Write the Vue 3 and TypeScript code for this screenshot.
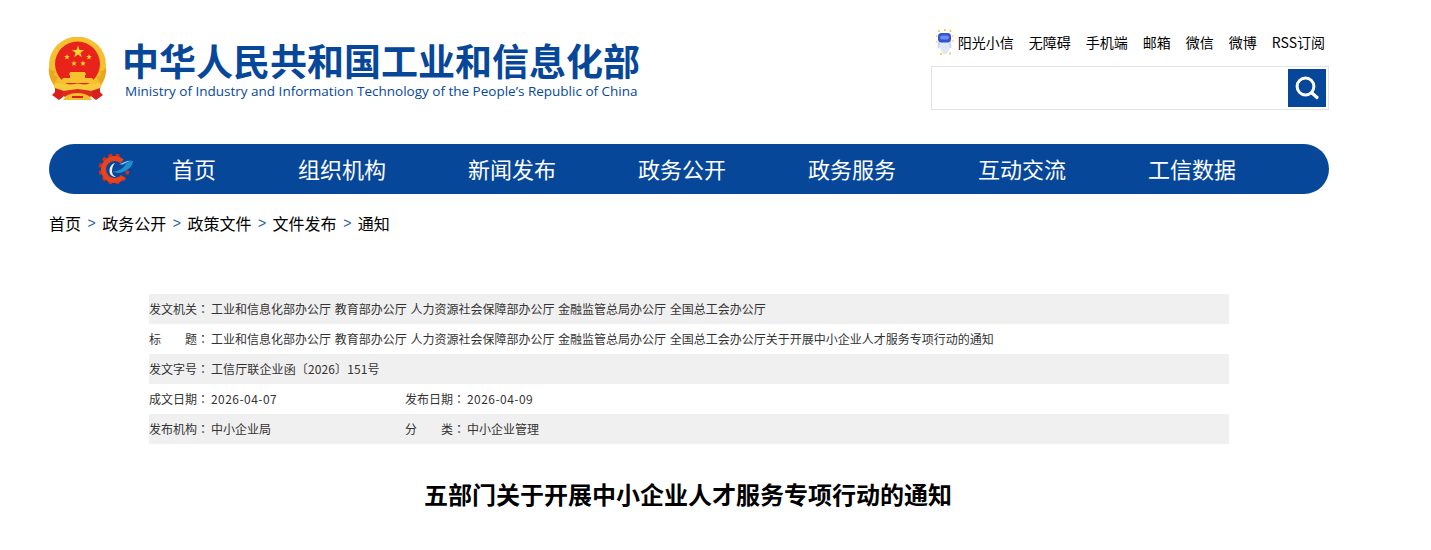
<template>
  <div class="page">
    <header class="top">
      <div class="brand">
        <svg class="emblem" viewBox="0 0 60 64" aria-hidden="true">
          <circle cx="29.500" cy="28" r="28.500" fill="#f5c02f" />
          <path d="M1 30c-1 8 2 15 7 21l3-4-3-3 2-4-4-2 1-4-4-1zM58 30c1 8-2 15-7 21l-3-4 3-3-2-4 4-2-1-4 4-1z" fill="#eaa81f" />
          <circle cx="29.500" cy="27" r="22.500" fill="#e8231c" />
          <polygon v-for="s in stars" :key="s.id" :points="s.points" fill="#fbd431" />
          <path d="M22 35h15l1 3h-1v3h7l4 5H11l4-5h7v-3h-1z" fill="#f6c22d" />
          <path d="M7 45c7 3 15 3 22.500 1.500C37 48 45 48 52 45l1 6-6 2-3 1-14.500-2L15 54l-3-1-6-2z" fill="#f8cb3a" />
          <path d="M7 51l6 2 3 1-1 6-4 3-7-5 3-3zM52 51l-6 2-3 1 1 6 4 3 7-5-3-3z" fill="#d8201c" />
          <path d="M15 54l14.500-2L44 54l1 5-4 1H18l-4-1z" fill="#de2a1f" />
          <path d="M18 59c3-2 7-3 11.500-3S38 57 41 59l3 4H15z" fill="#f4bd2a" />
          <path d="M24 59h11v2H24z" fill="#d8201c" />
        </svg>
        <div class="brand-text">
          <div class="brand-cn">中华人民共和国工业和信息化部</div>
          <div class="brand-en">Ministry of Industry and Information Technology of the People’s Republic of China</div>
        </div>
      </div>
      <div class="tools">
        <div class="links">
          <a class="link robot-link">
            <svg class="robot" viewBox="0 0 18 26" aria-hidden="true">
              <path d="M4 13h9l1 6-2 4-1 2H7l-1-2-2-4z" fill="#dfe8f8" />
              <path d="M2 13l2 .500-.500 6-2-1zM15 13l-2 .500.500 6 2-1z" fill="#c6d6f2" />
              <rect x="2" y="4" width="13" height="9.500" rx="3.500" fill="#3552cf" />
              <rect x="4" y="6.500" width="9" height="4" rx="2" fill="#6f8cf0" />
              <g fill="#f5c11f">
                <circle cx="3" cy="2" r="1" /><circle cx="9" cy="1" r="1" /><circle cx="14.500" cy="2" r="1" />
                <circle cx=".800" cy="7" r=".800" /><circle cx="16.800" cy="7" r=".800" /><circle cx="1" cy="13" r=".800" />
                <circle cx="17" cy="12" r=".800" /><circle cx="5" cy="25" r="1" /><circle cx="14" cy="24.500" r="1" />
              </g>
            </svg>
            阳光小信
          </a>
          <a class="link" v-for="l in links" :key="l">{{ l }}</a>
        </div>
        <div class="search">
          <input class="search-input" type="text" aria-label="搜索" />
          <button class="search-btn" aria-label="搜索">
            <svg width="26" height="26" viewBox="0 0 26 26" fill="none" stroke="#fff" stroke-linecap="round">
              <circle cx="11.500" cy="11.500" r="8.400" stroke-width="3" />
              <path d="M18 18l5 4.500" stroke-width="3.200" />
            </svg>
          </button>
        </div>
      </div>
    </header>

    <nav class="nav">
      <svg class="nav-logo" viewBox="0 0 34 32" aria-hidden="true">
        <g fill="#d62e1c">
          <rect v-for="a in teeth" :key="a" x="13" y="0.500" width="4" height="3.500" rx="1" :transform="`rotate(${a} 15 16)`" />
        </g>
        <path d="M23 8.500A11 11 0 1 0 24 23.500" fill="none" stroke="#e8431d" stroke-width="5" />
        <path d="M10.500 18c0-4 2-7 5.500-8-2 2-3 5-3 8 0 3 1.500 5 4 6-4 0-6.500-2.500-6.500-6z" fill="#f7e9dc" />
        <path d="M14 18.500c5 0 11-3 13-8 2-1 5-2.500 7-2.500 0 5-5 9-10 11-4 1.500-7.500 1-10-.500z" fill="#1f8fd2" />
        <path d="M20 11.500c4-2 9-4.500 13-3.500-3 0-6 2-9 3.500z" fill="#7cc8ee" />
      </svg>
      <a class="nav-item" v-for="n in navItems" :key="n">{{ n }}</a>
    </nav>

    <div class="crumbs">
      <template v-for="(c, i) in crumbs" :key="c">
        <span v-if="i > 0" class="sep">&gt;</span>
        <a class="crumb">{{ c }}</a>
      </template>
    </div>

    <section class="meta">
      <div class="row" v-for="(r, i) in rows" :key="i">
        <div class="cell" v-for="c in r" :key="c.label" :class="{ half: r.length > 1 }">
          <span class="label" :class="{ spread: c.label.length === 2 }">
            <template v-if="c.label.length === 2">
              <i>{{ c.label[0] }}</i><i>{{ c.label[1] }}</i>
            </template>
            <template v-else>{{ c.label }}</template>
          </span><span class="colon">：</span><span class="value" :class="c.kind">{{ c.value }}</span>
        </div>
      </div>
    </section>

    <h1 class="headline">五部门关于开展中小企业人才服务专项行动的通知</h1>
  </div>
</template>

<script setup lang="ts">
interface MetaCell {
  label: string
  value: string
  kind?: string
}

const links = ['无障碍', '手机端', '邮箱', '微信', '微博', 'RSS订阅']
const navItems = ['首页', '组织机构', '新闻发布', '政务公开', '政务服务', '互动交流', '工信数据']
const crumbs = ['首页', '政务公开', '政策文件', '文件发布', '通知']
// gear teeth, the right side is left open for the swoosh
const teeth = [-45, -15, 15, -75, -105, -135, -165, 165, 135, 105]

const offices = '工业和信息化部办公厅 教育部办公厅 人力资源社会保障部办公厅 金融监管总局办公厅 全国总工会办公厅'

const rows: MetaCell[][] = [
  [{ label: '发文机关', value: offices, kind: 'names' }],
  [{ label: '标题', value: offices + '关于开展中小企业人才服务专项行动的通知', kind: 'names' }],
  [{ label: '发文字号', value: '工信厅联企业函〔2026〕151号', kind: 'code' }],
  [
    { label: '成文日期', value: '2026-04-07', kind: 'date' },
    { label: '发布日期', value: '2026-04-09', kind: 'date' },
  ],
  [
    { label: '发布机构', value: '中小企业局' },
    { label: '分类', value: '中小企业管理' },
  ],
]

// five-point star outline around a centre
const star = (cx: number, cy: number, r: number) => {
  const pts: string[] = []
  for (let i = 0; i < 10; i++) {
    const rad = i % 2 === 0 ? r : r * 0.4
    const a = (Math.PI / 5) * i - Math.PI / 2
    pts.push(`${(cx + rad * Math.cos(a)).toFixed(2)},${(cy + rad * Math.sin(a)).toFixed(2)}`)
  }
  return pts.join(' ')
}

const stars = [
  { id: 1, points: star(30, 15, 6.5) },
  { id: 2, points: star(19, 20, 3) },
  { id: 3, points: star(41, 20, 3) },
  { id: 4, points: star(26, 26.5, 3) },
  { id: 5, points: star(35, 26.5, 3) },
]
</script>

<style>
body {
  background: #fff;
}
</style>

<style scoped>
.page {
  width: 1280px;
  margin-left: 49px;
  font-family: "Noto Sans CJK SC", "Liberation Sans", sans-serif;
  color: #000;
}
.top {
  display: flex;
  justify-content: space-between;
  height: 144px;
}
.brand {
  display: flex;
  align-items: flex-start;
  padding-top: 37px;
}
.emblem {
  width: 60px;
  height: 64px;
  flex: none;
  margin-left: -1px;
}
.brand-text {
  margin-left: 14px;
}
.brand-cn {
  font-size: 37px;
  line-height: 40px;
  font-weight: 700;
  color: #07479a;
  margin-top: 3px;
  white-space: nowrap;
}
.brand-en {
  font-family: "Open Sans", sans-serif;
  font-size: 13.5px;
  line-height: 18px;
  color: #07479a;
  margin: 2px 0 0 3px;
  white-space: nowrap;
}
.tools {
  width: 398px;
  padding-top: 29px;
}
.links {
  display: flex;
  justify-content: flex-end;
  align-items: center;
  gap: 15px;
  height: 26px;
  padding-right: 4px;
  font-size: 14px;
}
.link {
  color: #000;
  white-space: nowrap;
}
.robot-link {
  display: flex;
  align-items: center;
  gap: 4px;
}
.robot {
  width: 18px;
  height: 26px;
}
.search {
  display: flex;
  align-items: center;
  justify-content: space-between;
  height: 42px;
  margin-top: 11px;
  padding-right: 2px;
  border: 1px solid #e3e3e3;
}
.search-input {
  flex: 1;
  height: 100%;
  border: none;
  outline: none;
  background: transparent;
}
.search-btn {
  display: flex;
  align-items: center;
  justify-content: center;
  width: 38px;
  height: 38px;
  padding: 0;
  border: none;
  background: #07479a;
}
.nav {
  display: flex;
  align-items: center;
  gap: 82px;
  height: 48px;
  padding-left: 123px;
  padding-bottom: 2px;
  border-radius: 25px;
  background: #07479a;
  position: relative;
}
.nav-logo {
  position: absolute;
  left: 50px;
  top: 9px;
  width: 34px;
  height: 32px;
}
.nav-item {
  color: #fff;
  font-size: 22px;
  white-space: nowrap;
}
.crumbs {
  display: flex;
  align-items: center;
  height: 24px;
  margin-top: 17px;
  font-size: 16px;
}
.sep {
  margin: 0 6.5px;
  font-family: "Liberation Sans", sans-serif;
  font-size: 14px;
  color: #2a62a8;
}
.meta {
  width: 1080px;
  margin: 59px 0 0 100px;
  font-size: 12px;
  color: #333;
}
.row {
  display: flex;
  height: 30px;
  line-height: 30px;
}
.row:nth-child(odd) {
  background: #f0f0f0;
}
.cell {
  white-space: nowrap;
}
.half {
  width: 256px;
}
.label {
  display: inline-block;
  width: 48px;
}
.spread {
  display: inline-flex;
  justify-content: space-between;
}
.spread i {
  font-style: normal;
}
.colon {
  display: inline-block;
  width: 14px;
  font-family: "Noto Sans CJK TC", sans-serif;
}
.names {
  word-spacing: 1px;
}
.date {
  letter-spacing: 0.45px;
}
.code {
  letter-spacing: 0.12px;
}
.headline {
  width: 1080px;
  margin: 32px 0 0 99px;
  font-size: 24px;
  line-height: 36px;
  font-weight: 700;
  text-align: center;
}
</style>
